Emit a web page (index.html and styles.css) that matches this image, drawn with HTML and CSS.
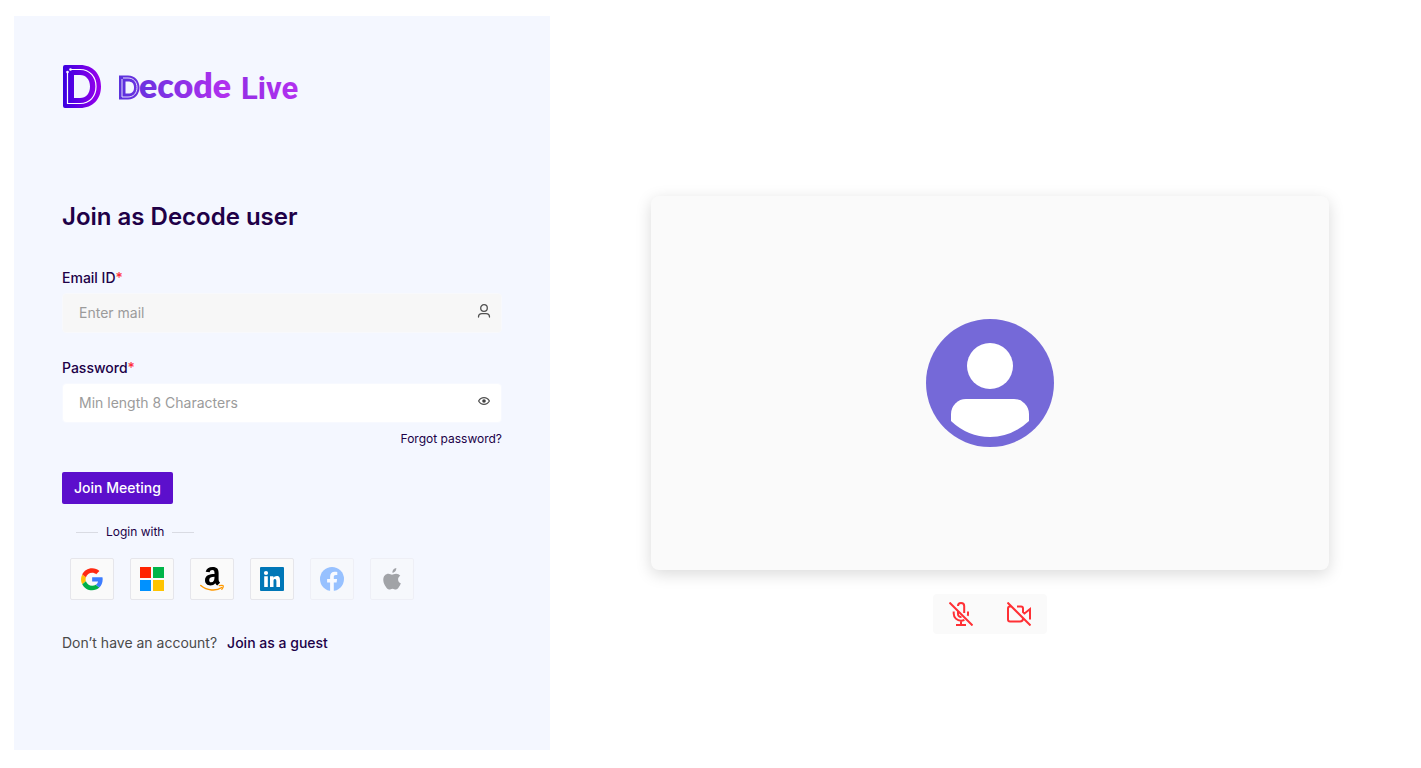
FILE: index.html
```html
<!DOCTYPE html>
<html lang="en">
<head>
<meta charset="utf-8">
<meta name="viewport" content="width=device-width, initial-scale=1">
<title>Decode Live</title>
<link rel="stylesheet" href="styles.css">
</head>
<body>
<main class="page">
  <section class="panel">
    <svg class="logo" viewBox="0 0 240 44" role="img" aria-label="Decode Live">
      <defs>
        <linearGradient id="mark" x1="0" x2="1" y1="0" y2="0"><stop offset="0" stop-color="#3a00e0"/><stop offset="1" stop-color="#9a00ec"/></linearGradient>
        <linearGradient id="word" gradientUnits="userSpaceOnUse" x1="56" x2="170" y1="0" y2="0"><stop offset="0" stop-color="#5a32dc"/><stop offset="1" stop-color="#b630f0"/></linearGradient>
        <linearGradient id="live" gradientUnits="userSpaceOnUse" x1="180" x2="238" y1="0" y2="0"><stop offset="0" stop-color="#962ee6"/><stop offset="1" stop-color="#b430f0"/></linearGradient>
      </defs>
      <path fill="url(#mark)" fill-rule="evenodd" d="M3 1H18C31 1 39 10 39 22.500S31 44 18 44H3Q1 44 1 42V3Q1 1 3 1ZM12 12V34H18C24 34 28 29.500 28 22.500S24 11 18 11H12Z"/>
      <path fill="none" stroke="#fff" stroke-width="1.200" d="M5.500 8V39.500H18C28 39.500 34 32 34 22.500S28 5.500 18 5.500H8.500"/>
      <circle cx="5.500" cy="8" r="1.300" fill="#fff"/><circle cx="8.500" cy="5.500" r="1.300" fill="#fff"/>
      <path fill="url(#word)" fill-rule="evenodd" d="M57 11.500H66C73 11.500 77.500 17 77.500 23.500S73 35.500 66 35.500H57ZM63.500 17.500V29.500H66C70 29.500 72 27.500 72 23.500S70 17.500 66 17.500Z"/>
      <path fill="none" stroke="#e4defc" stroke-width="1" d="M60 15V33H66C71.500 33 75 29 75 23.500S71.500 14 66 14H61"/>
      <text class="logo-word" x="77" y="34" fill="url(#word)">ecode</text>
      <text class="logo-live" x="179" y="35" fill="url(#live)">Live</text>
    </svg>

    <h1 class="title">Join as Decode user</h1>

    <form class="form">
      <div class="field">
        <label class="label" for="email">Email ID<span class="required">*</span></label>
        <div class="control control-muted">
          <input class="input" id="email" type="email" placeholder="Enter mail">
          <svg class="field-icon" viewBox="0 0 16 16" aria-hidden="true"><g fill="none" stroke="#505050" stroke-width="1.300" stroke-linecap="round"><circle cx="8" cy="5" r="3.300"/><path d="M2.500 14C2.500 11.500 4.500 10.700 6 10.700H10C11.500 10.700 13.500 11.500 13.500 14"/></g></svg>
        </div>
      </div>
      <div class="field">
        <label class="label" for="password">Password<span class="required">*</span></label>
        <div class="control">
          <input class="input" id="password" type="password" placeholder="Min length 8 Characters">
          <button class="reveal" type="button" aria-label="Show password"><svg class="field-icon" viewBox="0 0 16 16" aria-hidden="true"><path d="M2.600 8C5 3.600 11 3.600 13.400 8C11 12.400 5 12.400 2.600 8Z" fill="none" stroke="#505050" stroke-width="1.200" stroke-linejoin="round"/><circle cx="8" cy="8" r="1.800" fill="#404040"/></svg></button>
        </div>
      </div>
      <a class="forgot" href="#">Forgot password?</a>
      <button class="join" type="submit">Join Meeting</button>
    </form>

    <div class="divider"><span class="rule"></span><span>Login with</span><span class="rule"></span></div>

    <div class="providers">
      <button class="provider" type="button" aria-label="Google"><svg class="brand" viewBox="0 0 48 48"><g transform="translate(2 2) scale(.94)"><path fill="#ffc107" d="M9.800 24c0-1.520.250-2.980.700-4.360L2.600 13.600A23.900 23.900 0 0 0 0 24c0 3.740.870 7.260 2.410 10.390l7.910-6.050A14 14 0 0 1 9.800 24"/><path fill="#ff2a12" d="M23.700 10.130c3.310 0 6.300 1.170 8.650 3.090l6.840-6.830C35.020 2.770 29.700.530 23.700.530 14.400.530 6.440 5.840 2.620 13.600l7.910 6.040c1.820-5.530 7.020-9.510 13.170-9.510"/><path fill="#00b048" d="M23.700 37.870c-6.160 0-11.360-3.980-13.180-9.510l-7.900 6.040c3.810 7.760 11.770 13.070 21.080 13.070 5.730 0 11.200-2.030 15.310-5.850l-7.500-5.800c-2.120 1.330-4.790 2.050-7.810 2.050"/><path fill="#3d7dff" d="M46.140 24c0-1.390-.210-2.880-.530-4.270H23.700v9.070h12.600c-.630 3.090-2.340 5.470-4.800 7.010l7.510 5.800C43.330 37.610 46.140 31.650 46.140 24"/></g></svg></button>
      <button class="provider" type="button" aria-label="Microsoft"><svg class="brand" viewBox="0 0 24 24"><path fill="#ff2400" d="M0 0h11v11H0z"/><path fill="#00b548" d="M13 0h11v11H13z"/><path fill="#0091ff" d="M0 13h11v11H0z"/><path fill="#ffc400" d="M13 13h11v11H13z"/></svg></button>
      <button class="provider" type="button" aria-label="Amazon"><svg class="brand" viewBox="0 0 24 24"><path fill="#000" d="M14.500 7V6.200C14.500 4 14 2.900 12.300 2.900c-1.500 0-2.300.8-2.600 2.300L5.700 4.800C6.300 1.500 8.900 0 12.600 0c4.600 0 6 2.300 6 6v6.200c0 1.700.6 2.500 1.500 3.600L17.200 18.400c-.9-.7-1.500-1.400-1.900-2.200-1.300 1.500-2.800 2.200-5 2.200C7.300 18.400 5 16.500 5 13.200c0-5 4.600-6.100 9.500-6.200Zm0 2.700c-3.300 0-5.300.7-5.300 3.200 0 1.400.7 2.400 2 2.400 2.400 0 3.300-2.200 3.300-4.800Z"/><path fill="none" stroke="#f90" stroke-width="1.500" stroke-linecap="round" d="M.8 18.500C7 23.700 16 24.500 21.800 20.500"/><path fill="none" stroke="#f90" stroke-width="1.200" stroke-linejoin="round" stroke-linecap="round" d="M19.200 18.700C21 18.300 22.300 18.200 23 18.600C23.500 19.400 22.800 21.300 21.800 22.400"/></svg></button>
      <button class="provider" type="button" aria-label="LinkedIn"><svg class="brand" viewBox="0 0 24 24"><rect width="24" height="24" rx="1" fill="#0077b7"/><g fill="#fff"><circle cx="6" cy="6" r="2.100"/><path d="M4.200 9.300h3.600V20H4.200zM10 9.300h3.400v1.500C14 9.700 15.200 9 16.800 9 19.500 9 20 10.900 20 13.600V20h-3.600v-5.500c0-1.300-.1-2.600-1.500-2.600s-1.400 1.300-1.400 2.600V20H10z"/></g></svg></button>
      <button class="provider" type="button" aria-label="Facebook" disabled><svg class="brand" viewBox="0 0 24 24"><circle cx="12" cy="12" r="12" fill="#1877ff"/><path fill="#fff" d="M10.100 24V15.500H7.100V12h3V9.400c0-3 1.800-4.700 4.500-4.700 1.300 0 2.700.2 2.700.2v3h-1.500c-1.500 0-2 .9-2 1.900V12h3.300l-.5 3.500h-2.800V24z"/></svg></button>
      <button class="provider" type="button" aria-label="Apple" disabled><svg class="brand" viewBox="0 0 24 24"><path fill="#303030" d="M16.300 1c.1 1.300-.4 2.500-1 3.300-.7.900-1.800 1.500-2.900 1.500-.1-1.100.4-2.400 1-3.200C14.100 1.700 15.300 1.100 16.300 1ZM20.300 8.800c-1.600 1-2.200 2.200-2.200 3.600 0 1.800 1.100 3.300 2.700 3.900-.4 1.300-1 2.500-1.900 3.700-.8 1.200-1.700 2.500-3.100 2.500s-1.700-.8-3.300-.8-2 .8-3.300.8c-1.400 0-2.400-1.300-3.200-2.500C3.300 16.700 2 10.800 5 8.300c.9-1 2.100-1.500 3.400-1.500 1.500 0 2.700.9 3.600.9.900 0 2.300-1 4.100-1 1.700 0 3.200.7 4.200 2.100Z"/></svg></button>
    </div>

    <p class="signup">Don’t have an account? <a class="guest" href="#">Join as a guest</a></p>
  </section>

  <section class="preview">
    <div class="video">
      <svg class="avatar" viewBox="0 0 128 128" role="img" aria-label="Camera off"><circle cx="64" cy="64" r="64" fill="#7569d8"/><circle cx="64" cy="47" r="23" fill="#fff"/><path fill="#fff" d="M25 95A15 15 0 0 1 40 80H88A15 15 0 0 1 103 95V102Q86 118 64 118T25 102Z"/></svg>
    </div>
    <div class="devices">
      <button class="device" type="button" aria-label="Unmute microphone"><svg class="device-icon" viewBox="0 0 24 24"><path d="M0.500 0.500L23.500 23.500M9 4C9 2 10.200 1 12 1S15.200 2 15.200 4V11M9 8.500V12C9 14 10.500 15.300 12.500 15M4.700 9.500V11.500C4.700 15.500 8 18.700 12 18.700C13.200 18.700 14.400 18.400 15.400 17.900M19 9.500V12C19 12.600 18.900 13.300 18.700 13.800M12 18.700V23M7 23H17"/></svg></button>
      <button class="device" type="button" aria-label="Turn camera on"><svg class="device-icon" viewBox="0 0 24 24"><path d="M0.500 0.500L23.500 23.500M4.500 4.500H3Q1 4.500 1 6.500V17.500Q1 19.500 3 19.500H13Q16 19.500 16 16.500M10 4.500H14Q16 4.500 16 6.500V10L17.500 11.500L23 7V17.500"/></svg></button>
    </div>
  </section>
</main>
</body>
</html>
```
FILE: styles.css
```css
* { box-sizing: border-box; }
body { margin: 0; background: #fff; color: #200047; font-family: Inter, "Liberation Sans", sans-serif; font-size: 14px; line-height: 20px; }
button, input { font: inherit; }
button { cursor: pointer; }
a { color: inherit; text-decoration: none; }
svg { display: block; }

.page { display: grid; grid-template-columns: 536fr 848fr; gap: 16px; min-height: 100vh; padding: 16px 7px 18px 14px; }
.panel { display: flex; flex-direction: column; align-items: flex-start; padding: 48px; background: #f4f7ff; }
.logo { width: 240px; height: 44px; overflow: visible; }
.logo-word { font: 800 34px Lato, sans-serif; }
.logo-live { font: 700 31px Roboto, sans-serif; }
.title { margin: 93px 0 0; font-size: 24px; line-height: 32px; font-weight: 600; }

.form { display: flex; flex-direction: column; align-items: flex-start; width: 100%; margin-top: 35px; }
.field { width: 100%; margin-bottom: 25px; }
.label { display: block; margin-bottom: 5px; line-height: 20px; font-weight: 500; }
.required { color: #ff2d3d; }
.control { display: flex; align-items: center; height: 40px; padding: 0 9px 0 16px; background: #fff; border: 1px solid #f7f9ff; border-radius: 4px; }
.control-muted { background: #f7f7f7; border-color: #f8f9fc; }
.input { flex: 1; min-width: 0; padding: 0; border: 0; outline: 0; background: transparent; color: #200047; }
.input::placeholder { color: #9b9b9b; opacity: 1; }
.reveal { padding: 0; border: 0; background: none; }
.field-icon { width: 16px; height: 16px; margin-bottom: 4px; }
.forgot { align-self: flex-end; margin-top: -17px; font-size: 12px; line-height: 16px; }
.join { height: 32px; margin-top: 25px; padding: 0 12px; border: 0; border-radius: 2px; background: #5c0fcc; color: #fff; font-weight: 500; }

.divider { display: flex; align-items: center; gap: 8px; margin: 20px 0 0 14px; font-size: 12px; line-height: 16px; }
.rule { width: 22px; height: 1px; background: #d9dbe3; }
.providers { display: flex; gap: 16px; margin: 18px 0 0 8px; }
.provider { display: grid; place-items: center; width: 44px; height: 42px; padding: 0; border: 1px solid #e6e6eb; border-radius: 2px; background: #fafafa; }
.provider:disabled { opacity: .42; }
.brand { width: 24px; height: 24px; }
.signup { display: flex; gap: 10px; margin: 33px 0 0; color: #4a4a4a; }
.guest { color: #200047; font-weight: 500; }

.preview { display: flex; flex-direction: column; align-items: center; justify-content: center; padding-top: 64px; }
.video { display: grid; place-items: center; width: 80%; aspect-ratio: 678 / 374; border-radius: 8px; background: #fafafa; box-shadow: 0 4px 16px rgba(0, 0, 0, .15); }
.avatar { width: 128px; height: 128px; }
.devices { display: flex; gap: 18px; margin-top: 24px; padding: 0 8px; border-radius: 4px; background: #fafafa; }
.device { display: grid; place-items: center; width: 40px; height: 40px; padding: 0; border: 0; background: none; }
.device-icon { width: 24px; height: 24px; fill: none; stroke: #ff3035; stroke-width: 2; }
```
